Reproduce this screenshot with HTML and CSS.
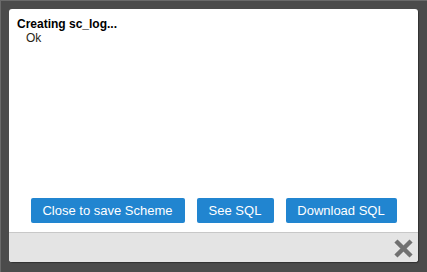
FILE: index.html
```html
<!DOCTYPE html>
<html>
<head>
<meta charset="utf-8">
<link rel="stylesheet" href="styles.css">
</head>
<body>
<div class="modal">
  <div class="content">
    <div class="log">
      <div class="title">Creating sc_log...</div>
      <div class="status">Ok</div>
    </div>
    <div class="actions">
      <button class="btn btn-close">Close to save Scheme</button>
      <button class="btn btn-see">See SQL</button>
      <button class="btn btn-dl">Download SQL</button>
    </div>
  </div>
  <div class="footer">
    <svg class="x-icon" width="19" height="19" viewBox="0 0 19 19">
      <path d="M3.5 3.5 L15.5 15.5 M15.5 3.5 L3.5 15.5" stroke="#707070" stroke-width="4.4" stroke-linecap="square"/>
    </svg>
  </div>
</div>
</body>
</html>
```

FILE: styles.css
```css
html, body {
  margin: 0;
  padding: 0;
}
body {
  background: #4b4b4b;
  width: 427px;
  height: 272px;
  box-sizing: border-box;
  border-top: 1px solid #6a6a6a;
  border-left: 1px solid #6a6a6a;
  padding: 8px 0 0 8px;
  font-family: "Liberation Sans", Arial, sans-serif;
}
.modal {
  width: 409px;
  height: 253px;
  background: #fff;
  border-radius: 3px;
  display: flex;
  flex-direction: column;
  overflow: hidden;
  box-shadow: 1px 1px 1px rgba(0,0,0,0.35);
}
.content {
  flex: 1;
  display: flex;
  flex-direction: column;
  justify-content: space-between;
  padding: 8px 0 9px 0;
}
.log {
  padding-left: 8px;
  font-size: 12px;
  line-height: 14px;
}
.title {
  font-weight: bold;
  color: #000;
}
.status {
  padding-left: 9px;
  color: #2a1f14;
}
.actions {
  display: flex;
  justify-content: center;
  gap: 12px;
}
.btn {
  background: #2185d0;
  color: #fff;
  border: none;
  border-radius: 2px;
  height: 25px;
  font-family: "Liberation Sans", Arial, sans-serif;
  font-size: 13px;
  padding: 0;
}
.btn-close { width: 154px; }
.btn-see { width: 77px; }
.btn-dl { width: 111px; }
.footer {
  height: 29px;
  background: #e4e4e4;
  border-top: 1px solid #c8c8c8;
  display: flex;
  justify-content: flex-end;
  align-items: center;
  padding-right: 5px;
}
.x-icon {
  display: block;
  margin-top: 2px;
}
```
